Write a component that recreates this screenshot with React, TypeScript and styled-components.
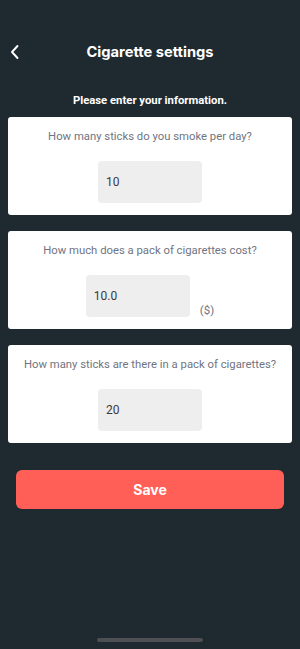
import React from "react";
import styled, { createGlobalStyle } from "styled-components";

const Global = createGlobalStyle`
  html, body { margin: 0; padding: 0; background: #1f2a30; }
  * { box-sizing: border-box; }
`;

const Screen = styled.div`
  width: 300px;
  height: 649px;
  background: #1f2a30;
  display: flex;
  flex-direction: column;
  font-family: Inter, "Noto Sans", sans-serif;
  position: relative;
  overflow: hidden;
`;

const Header = styled.div`
  margin-top: 32px;
  height: 40px;
  display: flex;
  align-items: center;
  justify-content: center;
  position: relative;
`;

const BackButton = styled.button`
  position: absolute;
  left: 3px;
  top: 8px;
  width: 24px;
  height: 24px;
  padding: 0;
  border: none;
  background: transparent;
  display: flex;
  align-items: center;
  justify-content: center;
`;

const Title = styled.h1`
  margin: 0;
  color: #ffffff;
  font-size: 14.7px;
  font-weight: 700;
`;

const Subtitle = styled.p`
  margin: 21px 0 8px;
  height: 16px;
  line-height: 16px;
  text-align: center;
  color: #ffffff;
  font-family: Roboto, "Noto Sans", sans-serif;
  font-size: 11.3px;
  font-weight: 700;
`;

const Cards = styled.div`
  display: flex;
  flex-direction: column;
  gap: 16px;
  padding: 0 8px;
`;

const Card = styled.div`
  background: #ffffff;
  border-radius: 3px;
  height: 98px;
  padding: 12px 0 12px;
  display: flex;
  flex-direction: column;
  align-items: center;
`;

const Question = styled.div`
  height: 16px;
  line-height: 16px;
  font-family: Roboto, "Noto Sans", sans-serif;
  font-size: 11.3px;
  color: #71747f;
  text-align: center;
`;

const InputRow = styled.div`
  margin-top: 16px;
  display: flex;
  align-items: flex-end;
  gap: 10px;
`;

const Field = styled.div`
  width: 104px;
  height: 42px;
  background: #eeeeee;
  border-radius: 4px;
  display: flex;
  align-items: center;
  padding-left: 8px;
  font-family: Roboto, "Noto Sans", sans-serif;
  font-size: 12px;
  color: #3a3a3a;
`;

const Unit = styled.span`
  font-family: Roboto, "Noto Sans", sans-serif;
  font-size: 11.5px;
  color: #71747f;
  line-height: 14px;
  margin-bottom: 0px;
`;

const SaveButton = styled.button`
  margin: 27px 16px 0 16px;
  height: 39px;
  border: none;
  border-radius: 6px;
  background: #ff5f57;
  color: #ffffff;
  font-family: Inter, "Noto Sans", sans-serif;
  font-size: 14px;
  font-weight: 700;
`;

const HomeIndicator = styled.div`
  position: absolute;
  left: 97px;
  bottom: 7px;
  width: 106px;
  height: 4px;
  border-radius: 2px;
  background: #4d4f52;
`;

const items = [
  { q: "How many sticks do you smoke per day?", v: "10" },
  { q: "How much does a pack of cigarettes cost?", v: "10.0", unit: "($)" },
  { q: "How many sticks are there in a pack of cigarettes?", v: "20" },
];

export default function App() {
  return (
    <Screen>
      <Global />
      <Header>
        <BackButton aria-label="Back">
          <svg width="12" height="16" viewBox="0 0 12 16">
            <path d="M8.5 2 L3 8 L8.5 14" fill="none" stroke="#ffffff" strokeWidth="1.9" strokeLinecap="round" strokeLinejoin="round" />
          </svg>
        </BackButton>
        <Title>Cigarette settings</Title>
      </Header>
      <Subtitle>Please enter your information.</Subtitle>
      <Cards>
        {items.map((it) => (
          <Card key={it.q}>
            <Question>{it.q}</Question>
            <InputRow>
              <Field>{it.v}</Field>
              {it.unit && <Unit>{it.unit}</Unit>}
            </InputRow>
          </Card>
        ))}
      </Cards>
      <SaveButton>Save</SaveButton>
      <HomeIndicator />
    </Screen>
  );
}
